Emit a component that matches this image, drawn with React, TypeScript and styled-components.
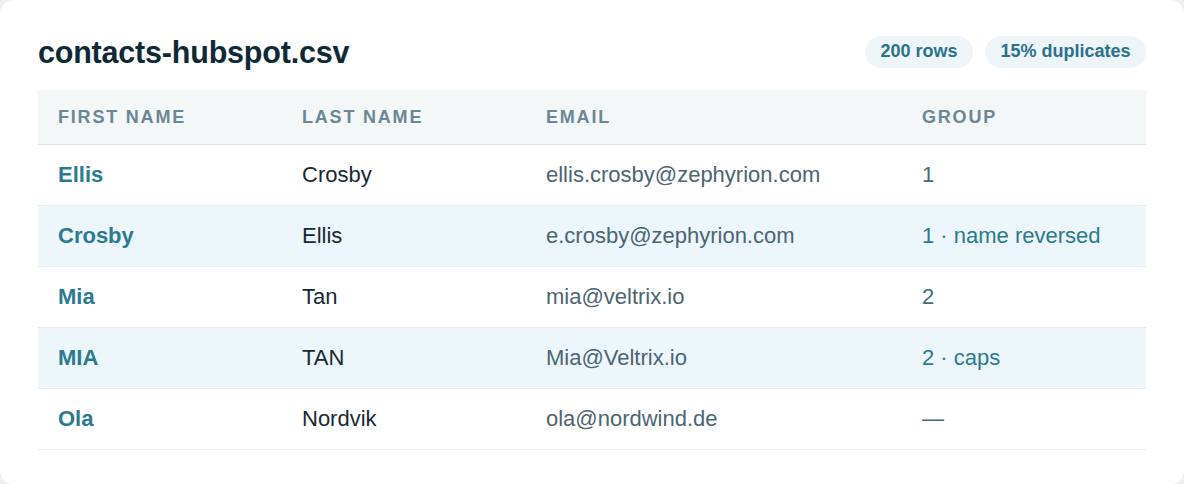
import React from "react";
import styled, { createGlobalStyle } from "styled-components";

const Global = createGlobalStyle`
  html, body { margin: 0; padding: 0; background: #eef1f3; }
  body { font-family: "Liberation Sans", Arial, sans-serif; }
  * { box-sizing: border-box; }
`;

const Card = styled.div`
  width: 1184px;
  height: 484px;
  background: #ffffff;
  border-radius: 14px;
  padding: 30px 38px 0 38px;
`;

const Header = styled.div`
  display: flex;
  align-items: center;
  justify-content: space-between;
  height: 44px;
  margin-bottom: 16px;
`;

const Title = styled.h1`
  margin: 0;
  font-size: 30.5px;
  font-weight: 700;
  color: #0f2a36;
  letter-spacing: -0.2px;
`;

const Badges = styled.div`
  display: flex;
  gap: 12px;
  margin-top: -1px;
`;

const Badge = styled.span`
  display: inline-flex;
  align-items: center;
  height: 32px;
  padding: 0 15.5px;
  border-radius: 16px;
  background: #eef5f8;
  color: #2a7189;
  font-size: 18px;
  font-weight: 700;
`;

const Table = styled.table`
  width: 1108px;
  border-collapse: collapse;
  table-layout: fixed;
`;

const Th = styled.th`
  text-align: left;
  padding: 2px 20px 0 20px;
  height: 54px;
  background: #f3f7f8;
  color: #6a8793;
  font-size: 18px;
  font-weight: 700;
  letter-spacing: 1.8px;
  text-transform: uppercase;
  border-bottom: 1px solid #dde4e7;
`;

const Tr = styled.tr<{ $hl?: boolean }>`
  background: ${(p) => (p.$hl ? "#edf6fa" : "#ffffff")};
`;

const Td = styled.td<{ $kind: "first" | "last" | "email" | "group"; $hl?: boolean }>`
  padding: 0 20px;
  height: 61px;
  font-size: 22px;
  border-bottom: 1px solid #e6ecee;
  white-space: nowrap;
  font-weight: ${(p) => (p.$kind === "first" ? 700 : 400)};
  color: ${(p) =>
    p.$kind === "first"
      ? "#2b7a92"
      : p.$kind === "last"
      ? "#172a33"
      : p.$kind === "email"
      ? "#4b6571"
      : p.$hl
      ? "#2b7a92"
      : "#446b79"};
`;

const rows = [
  { first: "Ellis", last: "Crosby", email: "ellis.crosby@zephyrion.com", group: "1" },
  { first: "Crosby", last: "Ellis", email: "e.crosby@zephyrion.com", group: "1 · name reversed", hl: true },
  { first: "Mia", last: "Tan", email: "mia@veltrix.io", group: "2" },
  { first: "MIA", last: "TAN", email: "Mia@Veltrix.io", group: "2 · caps", hl: true },
  { first: "Ola", last: "Nordvik", email: "ola@nordwind.de", group: "—" },
];

export default function App() {
  return (
    <>
      <Global />
      <Card>
        <Header>
          <Title>contacts-hubspot.csv</Title>
          <Badges>
            <Badge>200 rows</Badge>
            <Badge>15% duplicates</Badge>
          </Badges>
        </Header>
        <Table>
          <colgroup>
            <col style={{ width: 244 }} />
            <col style={{ width: 244 }} />
            <col style={{ width: 376 }} />
            <col style={{ width: 244 }} />
          </colgroup>
          <thead>
            <tr>
              <Th>First name</Th>
              <Th>Last name</Th>
              <Th>Email</Th>
              <Th>Group</Th>
            </tr>
          </thead>
          <tbody>
            {rows.map((r, i) => (
              <Tr key={i} $hl={r.hl}>
                <Td $kind="first">{r.first}</Td>
                <Td $kind="last">{r.last}</Td>
                <Td $kind="email">{r.email}</Td>
                <Td $kind="group" $hl={r.hl}>{r.group}</Td>
              </Tr>
            ))}
          </tbody>
        </Table>
      </Card>
    </>
  );
}
